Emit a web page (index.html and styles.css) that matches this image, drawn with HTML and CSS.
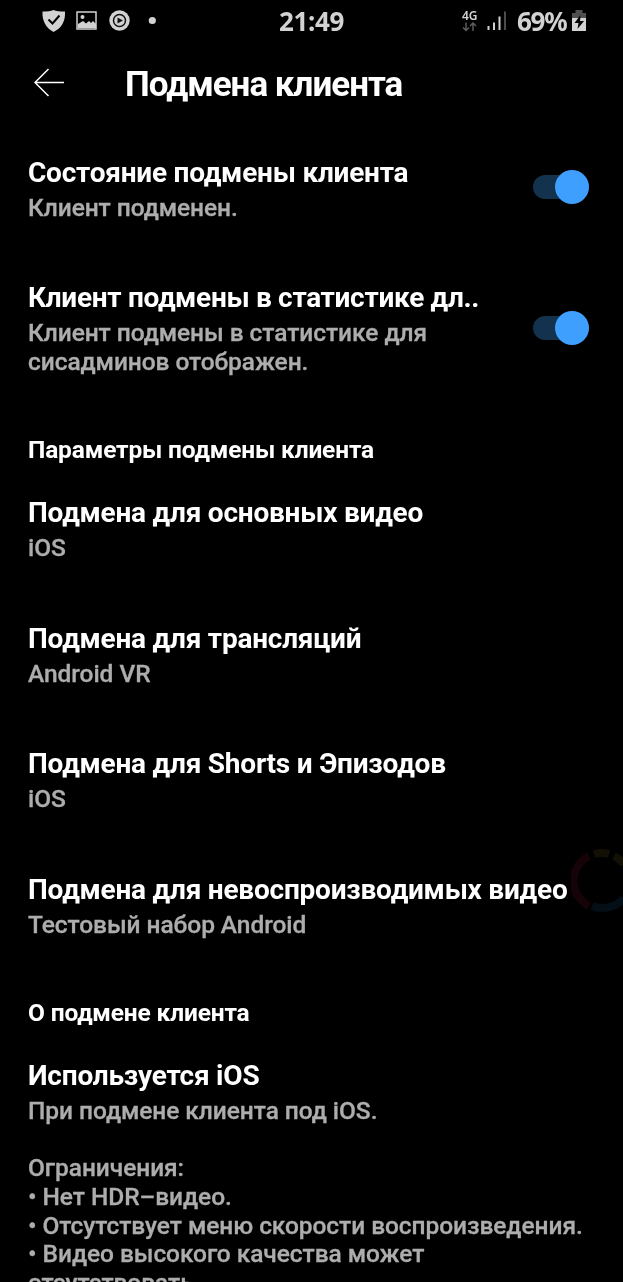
FILE: index.html
```html
<!DOCTYPE html>
<html lang="ru">
<head>
<meta charset="utf-8">
<title>Подмена клиента</title>
<link rel="stylesheet" href="styles.css">
</head>
<body>
<div class="screen">
  <header class="status">
    <svg class="status-left" width="120" height="24" viewBox="0 0 120 24">
      <path d="M0.500 2.500C5 2.500 9 2 11.500 1C14 2 18 2.500 23 2.500C23.500 12 20 19 11.500 23C4 19 0 12 0.500 2.500Z" fill="#d2d2d2"/>
      <path d="M6.500 10.500l4 4 7-8" fill="none" stroke="#000" stroke-width="2"/>
      <rect x="35" y="3" width="19" height="17" fill="none" stroke="#d2d2d2" stroke-width="1.500"/>
      <circle cx="40.500" cy="8" r="2" fill="#d2d2d2"/>
      <path d="M36 15l5-3 3 2.500 3-2.500 2 2 2-2 3 3v4H36z" fill="#d2d2d2"/>
      <circle cx="77.500" cy="11.500" r="10.200" fill="#d2d2d2"/>
      <circle cx="77.500" cy="11.500" r="6" fill="none" stroke="#111" stroke-width="1.500"/>
      <path d="M75.500 8.500l5.500 3-5.500 3z" fill="#111"/>
      <circle cx="110.300" cy="11.500" r="3.600" fill="#d2d2d2"/>
    </svg>
    <span class="clock">21:49</span>
    <div class="network">
      <span class="network-type">4G</span>
      <svg width="16" height="10" viewBox="0 0 16 10" fill="none" stroke="#5c5c5c" stroke-width="1.500">
        <path d="M4 0.500v8M1 5.500l3 3 3-3M11 9V1M8 4l3-3 3 3"/>
      </svg>
    </div>
    <svg class="signal" width="20" height="20" viewBox="0 0 20 20">
      <path d="M1.500 15v4M7 11.500V19M12.500 5.500V19" stroke="#d2d2d2" stroke-width="2"/>
      <path d="M18 0.500V19" stroke="#4c4c4c" stroke-width="2"/>
    </svg>
    <span class="percent">69%</span>
    <svg class="battery" width="14" height="22" viewBox="0 0 14 22">
      <path d="M3.500 0h7v3H14v5H0V3h3.500z" fill="#505050"/>
      <path d="M0 8h14v13H0z" fill="#d2d2d2"/>
      <path d="M8.500 5L2.500 13h4l-1 6 6.500-8H8z" fill="#000"/>
    </svg>
  </header>
  <div class="toolbar">
    <svg class="back" width="32" height="30" viewBox="0 0 32 30" fill="none" stroke="#fff" stroke-width="1.500">
      <path d="M14.500 2L1 15.500 14.500 29M1 15.500H30"/>
    </svg>
    <h1 class="heading">Подмена клиента</h1>
  </div>
  <main class="list">
    <section class="item item-switch">
      <div class="texts">
        <div class="title">Состояние подмены клиента</div>
        <div class="summary">Клиент подменен.</div>
      </div>
      <div class="switch"><i class="thumb"></i></div>
    </section>
    <section class="item item-switch">
      <div class="texts">
        <div class="title title-cut">Клиент подмены в статистике дл..</div>
        <div class="summary">Клиент подмены в статистике для<br>сисадминов отображен.</div>
      </div>
      <div class="switch"><i class="thumb"></i></div>
    </section>
    <h2 class="category">Параметры подмены клиента</h2>
    <section class="item">
      <div class="title">Подмена для основных видео</div>
      <div class="summary">iOS</div>
    </section>
    <section class="item">
      <div class="title">Подмена для трансляций</div>
      <div class="summary">Android VR</div>
    </section>
    <section class="item">
      <div class="title">Подмена для Shorts и Эпизодов</div>
      <div class="summary">iOS</div>
    </section>
    <section class="item">
      <div class="title">Подмена для невоспроизводимых видео</div>
      <div class="summary">Тестовый набор Android</div>
    </section>
    <h2 class="category">О подмене клиента</h2>
    <section class="item">
      <div class="title">Используется iOS</div>
      <div class="summary">При подмене клиента под iOS.<br><br>Ограничения:<br>• Нет HDR–видео.<br>• Отсутствует меню скорости воспроизведения.<br>• Видео высокого качества может<br>отсутствовать.</div>
    </section>
  </main>
  <svg class="floating-ring" width="52" height="64" viewBox="0 0 52 64" fill="none" stroke-width="8">
    <path d="M18 7A28 28 0 0 0 18 57" stroke="#160308"/>
    <path d="M23 5A28 28 0 0 1 38 5M43 7A28 28 0 0 1 53 15" stroke="#121004"/>
    <path d="M21 57A28 28 0 0 0 53 49" stroke="#030e16"/>
  </svg>
</div>
</body>
</html>
```
FILE: styles.css
```css
* { box-sizing: border-box; }
body { margin: 0; background: #000; font-family: Roboto, sans-serif; }
.screen { position: relative; width: 623px; height: 1282px; overflow: hidden; background: #000; color: #fff; }
.status { display: flex; align-items: center; height: 42px; padding-left: 42px; color: #d2d2d2; }
.status-left { flex: none; }
.clock { width: 67px; margin-left: 117px; font: 700 26px/30px "Noto Sans", sans-serif; letter-spacing: -0.35px; white-space: nowrap; }
.network { display: flex; flex-direction: column; width: 17px; margin-left: 116px; }
.network-type { font: 600 12px/12px "Noto Sans", sans-serif; }
.signal { margin-left: 8px; }
.percent { width: 50px; margin-left: 10px; font: 700 26px/30px "Noto Sans", sans-serif; letter-spacing: -1.3px; white-space: nowrap; }
.battery { margin-left: 5px; }
.toolbar { display: flex; align-items: center; height: 83.6px; padding: 0 0 2px 34px; }
.back { flex: none; margin-bottom: 1px; }
.heading { margin: 5px 0 0 59px; font-size: 35px; line-height: 42px; font-weight: 700; letter-spacing: -1px; white-space: nowrap; }
.item { padding: 29px 28px; }
.item-switch { display: flex; justify-content: space-between; align-items: center; padding-right: 34px; }
.title { margin-bottom: 3px; font-size: 28px; line-height: 36px; font-weight: 700; letter-spacing: -0.22px; white-space: nowrap; }
.title-cut { letter-spacing: -0.31px; }
.summary { color: #adadad; font-size: 24.5px; line-height: 28.7px; font-weight: 500; letter-spacing: -0.06px; -webkit-text-stroke: 0.3px #adadad; white-space: nowrap; }
.category { margin: 0; padding: 30px 28px 1.6px; font-size: 24.5px; line-height: 28.6px; font-weight: 700; letter-spacing: -0.16px; }
.switch { display: flex; align-items: center; justify-content: flex-end; width: 56px; height: 24px; margin-bottom: 2px; border-radius: 12px; background: #12324d; }
.thumb { width: 34px; height: 34px; flex: none; border-radius: 50%; background: #3e9fff; }
.floating-ring { position: absolute; left: 571px; top: 849px; mix-blend-mode: lighten; }
```
